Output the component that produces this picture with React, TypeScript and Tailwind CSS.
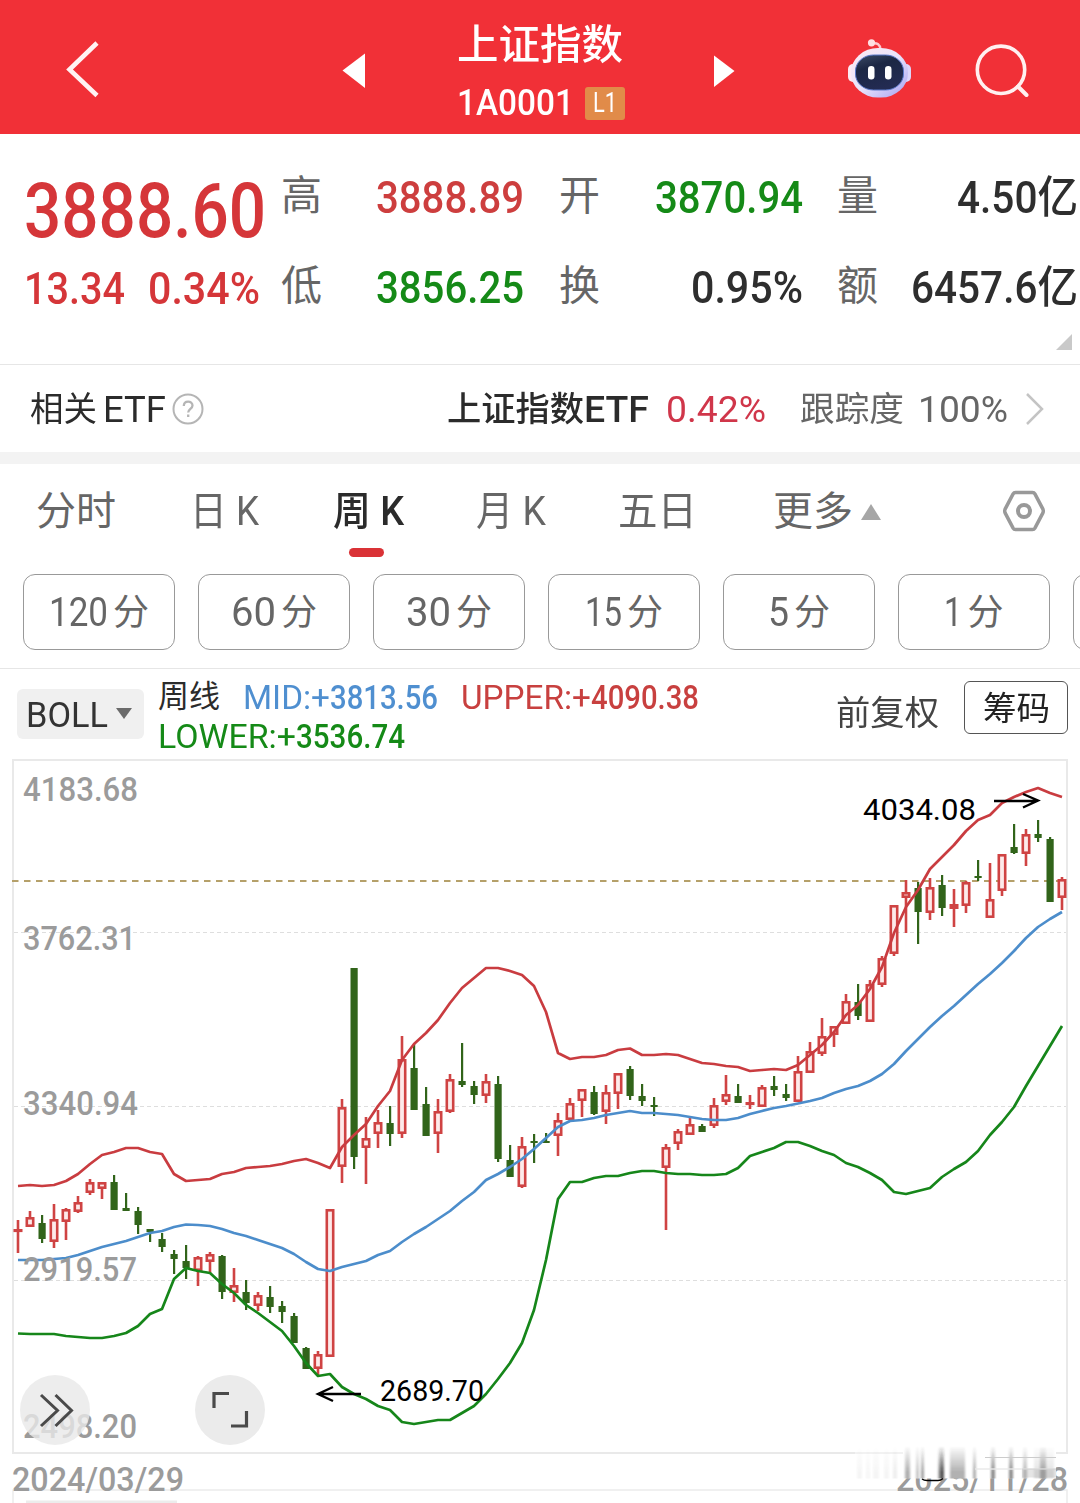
import { useLayoutEffect, useRef, useState, type ReactNode } from 'react';

type Candle = [kind: 'r' | 'g', high: number, top: number, bottom: number, low: number];

const STEP = 12;
const FIRST_X = 18;

const candles: Candle[] = [
    ['r', 1220, 1229, 1231, 1253], ['r', 1211, 1217, 1227, 1227], ['g', 1215, 1223, 1239, 1243],
    ['r', 1204, 1219, 1242, 1248], ['r', 1208, 1209, 1222, 1240], ['r', 1196, 1202, 1212, 1213],
    ['r', 1179, 1182, 1193, 1195], ['r', 1182, 1182, 1189, 1199], ['g', 1175, 1182, 1210, 1210],
    ['g', 1193, 1208, 1211, 1211], ['g', 1207, 1211, 1225, 1234], ['g', 1229, 1229, 1232, 1242],
    ['g', 1233, 1239, 1247, 1252], ['g', 1250, 1254, 1259, 1274], ['g', 1245, 1261, 1268, 1279],
    ['r', 1256, 1257, 1271, 1286], ['r', 1252, 1254, 1262, 1273], ['g', 1255, 1256, 1292, 1299],
    ['r', 1268, 1285, 1293, 1302], ['g', 1280, 1292, 1303, 1310], ['r', 1292, 1295, 1306, 1311],
    ['g', 1286, 1297, 1307, 1313], ['g', 1301, 1306, 1312, 1323], ['g', 1313, 1316, 1343, 1343],
    ['g', 1347, 1348, 1369, 1369], ['r', 1351, 1354, 1369, 1375], ['r', 1209, 1209, 1357, 1357],
    ['r', 1099, 1107, 1167, 1183], ['g', 968, 968, 1157, 1169], ['r', 1117, 1138, 1148, 1184],
    ['r', 1110, 1122, 1134, 1148], ['g', 1106, 1123, 1134, 1146], ['r', 1036, 1059, 1134, 1138],
    ['g', 1043, 1068, 1110, 1110], ['g', 1087, 1104, 1136, 1136], ['r', 1099, 1111, 1134, 1153],
    ['r', 1074, 1079, 1112, 1113], ['g', 1043, 1081, 1085, 1087], ['g', 1081, 1086, 1095, 1104],
    ['r', 1074, 1081, 1096, 1103], ['g', 1076, 1084, 1159, 1162], ['g', 1145, 1160, 1177, 1177],
    ['r', 1137, 1146, 1187, 1188], ['g', 1134, 1141, 1143, 1163], ['g', 1133, 1141, 1143, 1143],
    ['r', 1113, 1120, 1136, 1156], ['r', 1098, 1103, 1120, 1122], ['r', 1089, 1089, 1101, 1117],
    ['g', 1086, 1092, 1114, 1115], ['r', 1085, 1092, 1112, 1124], ['r', 1073, 1073, 1094, 1109],
    ['g', 1066, 1069, 1096, 1100], ['g', 1084, 1096, 1101, 1106], ['g', 1097, 1105, 1107, 1116],
    ['r', 1144, 1147, 1168, 1230], ['r', 1129, 1131, 1144, 1150], ['r', 1116, 1124, 1135, 1135],
    ['g', 1124, 1126, 1132, 1132], ['r', 1098, 1105, 1126, 1128], ['r', 1075, 1094, 1102, 1105],
    ['g', 1084, 1096, 1103, 1103], ['r', 1095, 1102, 1104, 1109], ['r', 1085, 1087, 1107, 1107],
    ['g', 1076, 1086, 1090, 1096], ['g', 1084, 1094, 1098, 1101], ['r', 1056, 1071, 1102, 1102],
    ['r', 1042, 1051, 1073, 1073], ['r', 1018, 1036, 1054, 1056], ['r', 1026, 1026, 1035, 1047],
    ['r', 994, 1001, 1024, 1024], ['g', 984, 1002, 1016, 1020], ['r', 980, 984, 1022, 1022],
    ['r', 956, 958, 985, 987], ['r', 905, 905, 954, 956], ['r', 880, 892, 898, 933],
    ['g', 882, 888, 912, 944], ['r', 878, 887, 913, 920], ['g', 875, 885, 908, 916],
    ['r', 889, 904, 909, 927], ['r', 881, 882, 906, 913], ['g', 860, 876, 878, 881],
    ['r', 863, 899, 918, 918], ['r', 854, 854, 891, 896], ['g', 824, 847, 853, 854],
    ['r', 829, 834, 854, 866], ['g', 820, 834, 838, 842], ['g', 837, 839, 902, 902],
    ['r', 877, 879, 898, 910],
];

const upper = [
    1186, 1185, 1186, 1185, 1181, 1174, 1164, 1155, 1152, 1148, 1148, 1152, 1154, 1174, 1181, 1180,
    1179, 1174, 1172, 1168, 1167, 1166, 1164, 1161, 1159, 1163, 1168, 1147, 1135, 1124, 1106, 1091,
    1060, 1044, 1033, 1020, 1003, 988, 978, 968, 968, 971, 975, 986, 1012, 1053, 1059, 1057, 1057,
    1055, 1050, 1048.5, 1055, 1055, 1054, 1055, 1059, 1063, 1064, 1066, 1067, 1071, 1070, 1069, 1070,
    1065, 1055, 1045, 1032, 1015, 1005, 989, 967, 933, 907, 890, 869, 857, 845, 831, 820, 815, 803,
    797, 792, 788, 793, 797,
];

const mid = [
    1260, 1260, 1260, 1259, 1258, 1255, 1251, 1247, 1244, 1241, 1237, 1233, 1231, 1227, 1224.5, 1225,
    1226, 1229, 1233, 1236, 1240, 1244, 1248, 1254, 1262, 1269, 1271, 1267, 1264, 1261, 1255, 1251,
    1242, 1234, 1227, 1219, 1211, 1201, 1192, 1180, 1174, 1167, 1159, 1149, 1138, 1127, 1121, 1120,
    1118, 1115, 1113, 1111, 1113, 1113, 1114, 1115, 1117, 1119, 1120, 1120, 1118, 1114, 1111, 1108,
    1106, 1103.5, 1101, 1098, 1093, 1089, 1086, 1081, 1074, 1064, 1051, 1039, 1027, 1016, 1006, 995,
    984, 974, 963, 951, 938, 927, 919, 912,
];

const lower = [
    1333.5, 1334, 1334, 1334, 1336, 1337, 1338, 1338, 1336, 1333, 1326, 1314, 1309, 1279, 1268, 1271,
    1273, 1284, 1293, 1305, 1313, 1322, 1331, 1346, 1363, 1376, 1374, 1387, 1394, 1399, 1406, 1410,
    1422, 1424, 1422, 1420, 1420, 1413, 1406, 1394, 1379, 1363, 1343, 1310, 1260, 1199, 1182, 1182,
    1178, 1176, 1176, 1173, 1171, 1171, 1173, 1174, 1174, 1175, 1175, 1174, 1168, 1156, 1152, 1148,
    1142, 1142, 1146, 1151, 1155, 1163, 1167, 1173, 1180, 1192, 1194, 1191, 1188, 1177, 1169, 1162,
    1151, 1135, 1122, 1107, 1086, 1066, 1046, 1026,
];

const tabs = [
    { label: '分时', w: 80 },
    { label: '日 K', w: 69 },
    { label: '周 K', w: 71, active: true },
    { label: '月 K', w: 70 },
    { label: '五日', w: 79 },
    { label: '更多', w: 80, more: true },
];

const minutes = [
    { label: '120', w: 59 },
    { label: '60', w: 45 },
    { label: '30', w: 45 },
    { label: '15', w: 37 },
    { label: '5', w: 21 },
    { label: '1', w: 18 },
    { label: '', w: 0 },
];

const toPoints = (ys: number[]) => ys.map((y, i) => `${FIRST_X + i * STEP},${y}`).join(' ');

// Squeezes a run of text into a fixed width, the way the narrow quote font does.
function Fit({ w, className = '', children }: { w: number; className?: string; children: ReactNode }) {
    const ref = useRef<HTMLSpanElement>(null);
    const [scale, setScale] = useState(1);
    useLayoutEffect(() => {
        if (ref.current && ref.current.offsetWidth > 0) {
            setScale(w / ref.current.getBoundingClientRect().width);
        }
    }, [w]);
    return (
        <span className={`inline-block shrink-0 whitespace-pre ${className}`} style={{ width: w }}>
            <span ref={ref} className="inline-block origin-left" style={{ transform: `scaleX(${scale})` }}>
                {children}
            </span>
        </span>
    );
}

function Header() {
    return (
        <header className="flex h-[134px] bg-[#f13037] text-white">
            <svg className="ml-16 h-[134px] w-9" viewBox="64 0 36 134" fill="none">
                <path d="M97 43 69.500 69.500 97 95.500" stroke="#fff3f3" strokeWidth="4.600" />
            </svg>
            <svg className="ml-[242px] h-[134px] w-6" viewBox="342 0 24 134">
                <path d="M342.500 70.500 365 53.500V88z" fill="white" />
            </svg>
            <div className="ml-[91px] flex w-[168px] flex-col">
                <Fit w={166} className="mt-[15px] text-[41px] leading-[60px] font-medium">上证指数</Fit>
                <div className="mt-[11px] flex items-center">
                    <Fit w={117} className="text-[37px] leading-[34px] font-medium">1A0001</Fit>
                    <span className="ml-[11px] flex h-[33px] w-10 items-center justify-center rounded-[3px] bg-[#e18b49]">
                        <Fit w={24} className="text-[27px] leading-8">L1</Fit>
                    </span>
                </div>
            </div>
            <svg className="ml-[88px] h-[134px] w-[22px]" viewBox="713 0 22 134">
                <path d="M714 55.500V87l20.500-16z" fill="white" />
            </svg>
            <Robot />
            <svg className="ml-[62px] h-[134px] w-14" viewBox="974 0 56 134" fill="none" stroke="#fff0f0" strokeWidth="3.600">
                <circle cx="1001" cy="69.800" r="23.700" />
                <path d="M1018 86.500 1026.500 95" strokeWidth="4" strokeLinecap="round" />
            </svg>
        </header>
    );
}

function Robot() {
    return (
        <svg className="ml-[111px] h-[134px] w-[66px]" viewBox="846 0 66 134">
            <defs>
                <linearGradient id="shell" x1="0" y1="0" x2="1" y2="1">
                    <stop offset="0" stopColor="#ffe9f0" />
                    <stop offset="0.500" stopColor="#e9e4fb" />
                    <stop offset="0.850" stopColor="#b9b3f4" />
                    <stop offset="1" stopColor="#fbdff0" />
                </linearGradient>
                <linearGradient id="visor" x1="0" y1="0" x2="0.400" y2="1">
                    <stop offset="0" stopColor="#3c4b66" />
                    <stop offset="0.400" stopColor="#1c2744" />
                    <stop offset="1" stopColor="#232b52" />
                </linearGradient>
            </defs>
            <path d="M872 43.500q8-1.500 8.500 6" fill="none" stroke="#ffc9cf" strokeWidth="2.400" />
            <circle cx="871.500" cy="42.800" r="3.600" fill="#ffdfe2" />
            <rect x="848" y="64" width="10" height="18" rx="5" fill="#fdeaf3" />
            <rect x="901" y="64" width="10" height="18" rx="5" fill="#dcd6fa" />
            <rect x="851" y="48" width="57" height="49.500" rx="27" ry="24.500" fill="url(#shell)" />
            <rect x="855.500" y="55" width="48" height="35" rx="18" ry="16" fill="url(#visor)" stroke="#5a78c8" strokeWidth="1" />
            <rect x="868" y="66" width="6.500" height="13.500" rx="3.200" fill="white" />
            <rect x="885" y="66" width="6.500" height="13.500" rx="3.200" fill="white" />
        </svg>
    );
}

function Stat({ label, w, value, color }: { label: string; w: number; value: string; color: string }) {
    return (
        <div className="flex h-[90px] items-center justify-between">
            <span className="text-[41px] leading-[60px] text-[#666]">{label}</span>
            <Fit w={w} className={`pt-[3px] text-[44px] leading-[60px] font-medium ${color}`}>{value}</Fit>
        </div>
    );
}

function Quote() {
    return (
        <section className="flex h-[231px] border-b border-[#e6e6e6] pt-[17px]">
            <div className="w-[281px] pl-6 text-[#d53639]">
                <Fit w={242} className="h-[91px] pt-[14px] text-[76px] leading-[92px] font-medium">3888.60</Fit>
                <div className="flex h-[90px] items-center">
                    <Fit w={101} className="text-[44px] leading-[60px] font-medium">13.34</Fit>
                    <Fit w={112} className="ml-[23px] text-[44px] leading-[60px] font-medium">0.34%</Fit>
                </div>
            </div>
            <div className="w-[243px]">
                <Stat label="高" w={148} value="3888.89" color="text-[#cd3e3e]" />
                <Stat label="低" w={148} value="3856.25" color="text-[#158a17]" />
            </div>
            <div className="ml-[35px] w-[244px]">
                <Stat label="开" w={148} value="3870.94" color="text-[#158a17]" />
                <Stat label="换" w={112} value="0.95%" color="text-[#2e2e2e]" />
            </div>
            <div className="ml-[34px] w-[241px]">
                <Stat label="量" w={121} value="4.50亿" color="text-[#2e2e2e]" />
                <Stat label="额" w={167} value="6457.6亿" color="text-[#2e2e2e]" />
                <svg className="ml-[219px] mt-[3px] h-4 w-4" viewBox="0 0 16 16">
                    <path d="M16 0v16H0z" fill="#c9c9c9" />
                </svg>
            </div>
        </section>
    );
}

function RelatedEtf() {
    return (
        <section className="flex h-[99px] items-center border-b-[12px] border-[#f3f3f3] text-[34px] leading-[60px] text-[#2b2b2b]">
            <Fit w={67} className="ml-[30px]">相关</Fit>
            <Fit w={63} className="ml-[6px] pt-[2px] text-[36px]">ETF</Fit>
            <svg className="ml-[6px] h-8 w-8" viewBox="0 0 32 32" fill="none" stroke="#b5b5b5" strokeWidth="2">
                <circle cx="16" cy="16" r="14.500" />
                <path d="M11.800 13c0-6 8.700-5.600 8.700-.6 0 3.400-4.300 3.600-4.300 7.200M16.200 21.500v2.600" strokeWidth="2.300" />
            </svg>
            <Fit w={137} className="ml-[243px] font-medium">上证指数</Fit>
            <Fit w={65} className="pt-[2px] text-[36px] font-medium">ETF</Fit>
            <Fit w={100} className="ml-[17px] pt-[2px] text-[37px] text-[#d0364a]">0.42%</Fit>
            <Fit w={104} className="ml-[34px] text-[#666]">跟踪度</Fit>
            <Fit w={90} className="ml-[14px] pt-[2px] text-[37px] text-[#666]">100%</Fit>
            <svg className="ml-[17px] h-9 w-5" viewBox="0 0 20 36" fill="none" stroke="#c4c4c4" strokeWidth="2.500">
                <path d="m2 3 15 15L2 33" />
            </svg>
        </section>
    );
}

function Tabs() {
    return (
        <nav className="grid h-[110px] grid-cols-[154px_143px_143px_142px_155px_230px_42px] pl-9 text-[40px] leading-[60px] text-[#666]">
            {tabs.map((tab) => (
                <div key={tab.label} className={tab.active ? 'font-medium text-[#2b2b2b]' : ''}>
                    <div className="flex h-[84px] items-center pt-[12px]">
                        <Fit w={tab.w}>{tab.label}</Fit>
                        {tab.more && (
                            <svg className="ml-2 h-4 w-5" viewBox="0 0 20 16">
                                <path d="M10 0 20 16H0z" fill="#a6a6a6" />
                            </svg>
                        )}
                    </div>
                    {tab.active && <div className="ml-4 h-[9px] w-[35px] rounded-full bg-[#da3236]" />}
                </div>
            ))}
            <svg className="mt-[26px] h-[42px] w-[42px]" viewBox="0 0 42 42" fill="none" stroke="#999" strokeWidth="3.500">
                <path d="M12.500 2.500h17q1.600 0 2.400 1.400l8 15.200q.8 1.900 0 3.800l-8 15.200q-.8 1.400-2.400 1.400h-17q-1.600 0-2.400-1.400l-8-15.200q-.8-1.900 0-3.800l8-15.200q.8-1.400 2.400-1.400z" />
                <circle cx="21" cy="21" r="6" strokeWidth="4" />
            </svg>
        </nav>
    );
}

function MinuteButtons() {
    return (
        <div className="flex h-[95px] gap-[23px] overflow-hidden border-b border-[#e6e6e6] pl-[23px] text-[#666]">
            {minutes.map((m) => (
                <div key={m.label} className="flex h-[76px] w-[152px] shrink-0 items-center justify-center gap-[5px] rounded-xl border border-[#999]">
                    {m.label && (
                        <>
                            <Fit w={m.w} className="pt-[2px] text-[40px] leading-[60px]">{m.label}</Fit>
                            <span className="pt-[2px] text-[36px] leading-[60px]">分</span>
                        </>
                    )}
                </div>
            ))}
        </div>
    );
}

function Indicators() {
    return (
        <div className="flex h-[90px] text-[33px] leading-[40px]">
            <div className="mt-5 ml-[17px] flex h-[50px] w-[127px] items-center rounded-md bg-[#f0f0f0] pl-[9px] text-[35px] text-[#333]">
                <Fit w={82} className="pt-[3px]">BOLL</Fit>
                <svg className="ml-2 h-3 w-4" viewBox="0 0 16 12">
                    <path d="M0 0h16L8 11z" fill="#6b6b6b" />
                </svg>
            </div>
            <div className="ml-[14px] w-[678px] pt-2">
                <div className="flex h-[39px] items-center">
                    <Fit w={62} className="text-[31px] text-[#2b2b2b]">周线</Fit>
                    <Fit w={87} className="ml-[23px] pt-[2px] text-[#4f8fd0]">MID:+</Fit>
                    <Fit w={108} className="pt-[2px] font-medium text-[#4f8fd0]">3813.56</Fit>
                    <Fit w={130} className="ml-[23px] pt-[2px] text-[#c8403f]">UPPER:+</Fit>
                    <Fit w={108} className="pt-[2px] font-medium text-[#c8403f]">4090.38</Fit>
                </div>
                <div className="flex h-[40px] items-center text-[#158a17]">
                    <Fit w={138} className="pt-[1px]">LOWER:+</Fit>
                    <Fit w={109} className="pt-[1px] font-medium">3536.74</Fit>
                </div>
            </div>
            <Fit w={103} className="pt-[24px] text-[34px] text-[#444]">前复权</Fit>
            <div className="mt-3 ml-[25px] flex h-[53px] w-[104px] items-center justify-center rounded-md border border-[#555] text-[#222]">
                <Fit w={67} className="pt-[2px] text-[33px]">筹码</Fit>
            </div>
        </div>
    );
}

function CandleMark({ x, candle }: { x: number; candle: Candle }) {
    const [kind, high, top, bottom, low] = candle;
    if (kind === 'g') {
        return (
            <g fill="#31641a">
                <rect x={x - 1} y={high} width="2.200" height={low - high} />
                <rect x={x - 3.500} y={top} width="7.200" height={bottom - top} />
            </g>
        );
    }
    return (
        <g fill="none" stroke="#cf4343" strokeWidth="2.600">
            <path d={`M${x} ${high}V${top}M${x} ${bottom}V${low}`} />
            <rect x={x - 3.200} y={top + 1.300} width="6.400" height={Math.max(bottom - top - 2.600, 0.500)} fill="#fdeaea" />
        </g>
    );
}

function AxisLabel({ x, y, w, children }: { x: number; y: number; w: number; children: string }) {
    return (
        <text x={x} y={y} textLength={w} lengthAdjust="spacingAndGlyphs" fontSize="34" fontWeight="500" fill="#9b9b9b">
            {children}
        </text>
    );
}

function Chart() {
    return (
        <svg className="block h-[744px] w-[1080px]" viewBox="0 759 1080 744" fill="none">
            <rect x="13" y="760" width="1054" height="693" stroke="#e9e9e9" strokeWidth="2" />
            <path d="M13 1503v-13h1054v13" stroke="#ececec" strokeWidth="1.500" />
            <path d="M26 1502h151" stroke="#ececec" strokeWidth="3" />
            <path d="M14 932.500h1052M14 1106.500h1052M14 1280.500h1052" stroke="#dedede" strokeDasharray="4 3" />
            <path d="M12 881h1055" stroke="#b5a06a" strokeWidth="1.800" strokeDasharray="6.500 5.500" />

            {candles.map((candle, i) => (
                <CandleMark key={i} x={FIRST_X + i * STEP} candle={candle} />
            ))}
            <g strokeWidth="2.700" strokeLinejoin="round">
                <polyline points={toPoints(upper)} stroke="#c93c40" />
                <polyline points={toPoints(mid)} stroke="#4c8dcb" />
                <polyline points={toPoints(lower)} stroke="#16861a" />
            </g>

            <AxisLabel x={23} y={801} w={115}>4183.68</AxisLabel>
            <AxisLabel x={23} y={950} w={113}>3762.31</AxisLabel>
            <AxisLabel x={23} y={1115} w={115}>3340.94</AxisLabel>
            <AxisLabel x={23} y={1281} w={114}>2919.57</AxisLabel>
            <AxisLabel x={23} y={1438} w={114}>2498.20</AxisLabel>
            <AxisLabel x={12} y={1491} w={172}>2024/03/29</AxisLabel>
            <AxisLabel x={896} y={1491} w={172}>2025/11/28</AxisLabel>

            <g stroke="black" strokeWidth="2.400">
                <path d="M994 801h43M1023 794l15 6.500-15 7" />
                <path d="M361 1394h-42M333 1387l-15 7 15 7" />
            </g>
            <g fill="black" fontSize="30">
                <text x="863" y="820" textLength="113" lengthAdjust="spacingAndGlyphs">4034.08</text>
                <text x="380" y="1401" textLength="104" lengthAdjust="spacingAndGlyphs">2689.70</text>
            </g>

            <circle cx="55" cy="1410" r="35" fill="#e9e9e9" fillOpacity="0.800" />
            <circle cx="230" cy="1410" r="35" fill="#ebebeb" />
            <path d="m41 1395 16.500 15.500L41 1426M55.500 1395l16 15.500-16 15.500" stroke="#4a4a4a" strokeWidth="3" />
            <path d="M214 1408v-14.500h15M246.500 1411v15H231" stroke="#4a4a4a" strokeWidth="3.200" />

            <Smear />
        </svg>
    );
}

// [x, width, opacity] of each vertical streak that runs over the end date
const streaks = [
    [857, 5, 0.04], [866, 4, 0.03], [873, 6, 0.04], [884, 5, 0.04], [893, 4, 0.07],
    [905, 5, 0.35], [916, 3, 0.25], [921, 3, 0.4], [938, 3, 0.35], [940, 4, 0.75], [950, 15, 0.35],
    [973, 3, 0.35], [991, 4, 0.5], [1009, 4, 0.5], [1023, 4, 0.3], [1034, 20, 0.12], [1040, 6, 0.35],
];

function Smear() {
    return (
        <g>
            <defs>
                <linearGradient id="streak" x1="0" y1="0" x2="0" y2="1">
                    <stop offset="0" stopColor="#222" stopOpacity="0" />
                    <stop offset="0.800" stopColor="#222" />
                    <stop offset="1" stopColor="#222" />
                </linearGradient>
                <filter id="soft" x="-50%" y="-5%" width="200%" height="110%">
                    <feGaussianBlur stdDeviation="1 0" />
                </filter>
            </defs>
            <rect x="855" y="1446" width="201" height="32.500" fill="white" />
            <path d="M855 1453h48" stroke="#eee" strokeWidth="1.500" />
            {streaks.map(([x, w, o]) => (
                <rect key={x} x={x} y="1446" width={w} height="32.500" fill="url(#streak)" opacity={o} filter="url(#soft)" />
            ))}
            <path d="M985 1457.500h71" stroke="#ccc" strokeWidth="1.200" />
            <path d="M975 1469h81" stroke="#e8e8e8" strokeWidth="2" strokeOpacity="0.700" />
            <path d="M1022 1473h34" stroke="#999" strokeWidth="9" strokeOpacity="0.250" />
            <path d="M922 1479q2 1.500 5 1.500h11q3 0 5-2" stroke="black" strokeWidth="1.500" />
        </g>
    );
}

export default function App() {
    return (
        <main className="h-[1503px] w-[1080px] overflow-hidden bg-white font-['Roboto','Noto_Sans_CJK_SC',sans-serif]">
            <Header />
            <Quote />
            <RelatedEtf />
            <Tabs />
            <MinuteButtons />
            <Indicators />
            <Chart />
        </main>
    );
}
